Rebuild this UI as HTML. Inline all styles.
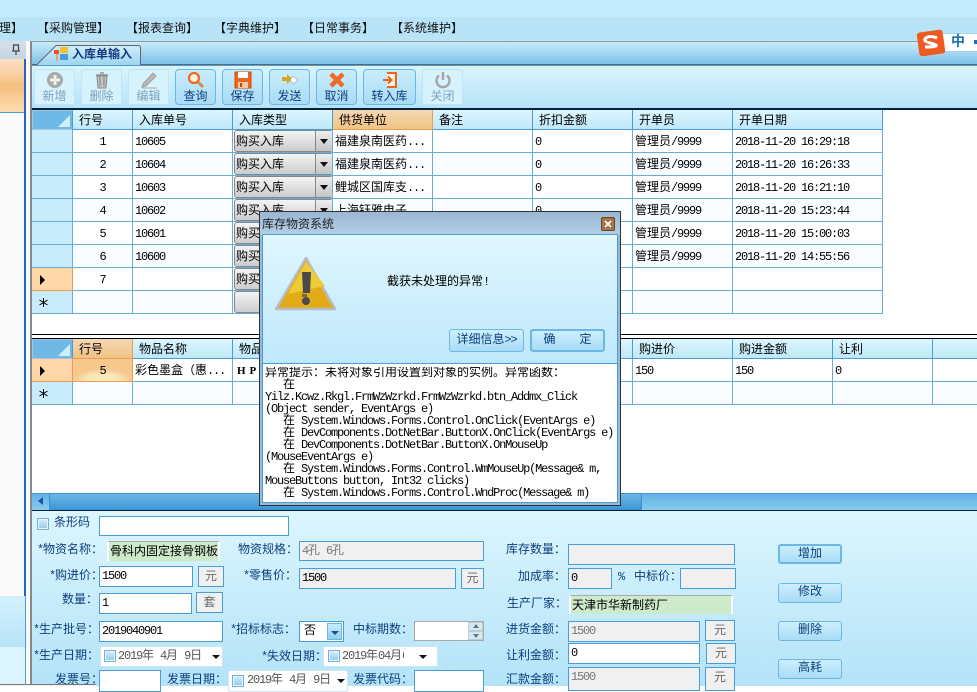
<!DOCTYPE html>
<html lang="zh"><head><meta charset="utf-8"><title>入库单输入</title>
<style>
html,body{margin:0;padding:0}
body{width:977px;height:686px;overflow:hidden;position:relative;background:#fff;font:12px/14px "Liberation Mono","WenQuanYi Zen Hei","Noto Sans CJK SC",monospace;color:#000}
div,span,svg,table{position:absolute;box-sizing:border-box}
em{font-style:normal;font-size:12px;letter-spacing:-1.2px;line-height:0}
.t{white-space:pre;height:14px;line-height:14px;margin-top:1px}
.l{color:#0e3f7c}
.m{top:22px;color:#111;white-space:pre;height:14px;line-height:14px}
.tb{top:69px;height:36px;border-radius:4px;border:1px solid #6db7e3;background:linear-gradient(#c9edfc,#a9dbf5);color:#0e3f7c;text-align:center}
.tb.d{border-color:#bee6f8;background:#d6f2fd;color:#7fa3bd}
.tb b{position:absolute;left:0;right:0;top:20px;font-weight:normal;line-height:14px}
.tb svg{left:50%;top:1px;margin-left:-10px}
table{border-collapse:separate;border-spacing:0;table-layout:fixed}
td,th{box-sizing:border-box;border-right:1px solid #6aaed6;border-bottom:1px solid #6aaed6;padding:2px 0 0 2px;font-weight:normal;text-align:left;white-space:nowrap;overflow:hidden;position:relative;height:23px;background:#fff}
tr.a td{background:#f9fdff}
th{height:20px;padding:2px 0 0 6px;border-bottom:1px solid #4a9cd8;border-right:1px solid #4a9cd8;background:linear-gradient(#dcf6fe,#bfe8fb)}
th.o{background:linear-gradient(#f6d8b4,#efc383);border-color:#ee9d50}
td.r{background:#c9ecfd!important;padding:0}
td.s{background:#fed6a8!important;border-color:#ee9d50;padding:0}
td.n{text-align:center;padding:2px 0 0 0}
.corner{background:#6fb9e6!important;padding:0;border:1px solid #a7c6e0;border-right:1px solid #4a9cd8}
.corner:after{content:"";position:absolute;right:2px;bottom:2px;width:0;height:0;border-left:12px solid transparent;border-bottom:12px solid #cfeefa}
.arr{left:8px;top:7px;width:0;height:0;border-left:5px solid #000;border-top:5px solid transparent;border-bottom:5px solid transparent}
.c{left:1px;top:0;width:99px;height:22px;border:1px solid #808890;border-radius:3px;background:linear-gradient(#f4f4f4,#cccccc);padding-left:1px;line-height:22px}
.c i{position:absolute;right:0;top:0;width:16px;height:20px;background:linear-gradient(#eee,#c4c4c4);border-left:1px solid #888}
.c i:after{content:"";position:absolute;left:4px;top:8px;border-left:4px solid transparent;border-right:4px solid transparent;border-top:5px solid #111}
.i{background:#fff;border:1px solid #4a9cd8;padding:2px 0 0 2px;line-height:14px;white-space:pre;overflow:hidden}
.g{background:#f0f0f0}
.gt{color:#777}
.u{background:#f0f0f0;border:1px solid #4a9cd8;color:#666;text-align:center;padding-top:3px;line-height:14px}
.gr{background:#cdeacb;border-top:1px solid #aaa;border-left:2px solid #fff;border-right:2px solid #fff;padding:3px 0 0 1px;line-height:14px;white-space:pre;overflow:hidden}
.b{left:778px;width:64px;height:20px;border:1px solid #6db7e3;border-radius:3px;background:linear-gradient(#cdeffd,#a8dcf6);color:#0e3f7c;text-align:center;line-height:17px}
.d{background:#fff;border:1px solid #cfe6f3;border-radius:2px;color:#555;line-height:20px;white-space:pre}
.ck{width:12px;height:12px;border:1px solid #6fb3d8;background:linear-gradient(#d4effb,#8ecbea);box-shadow:inset 0 0 0 1px #eef}
.da{width:0;height:0;border-left:4px solid transparent;border-right:4px solid transparent;border-top:4px solid #111}
</style></head><body>

<!-- top band -->
<div style="left:0;top:0;width:977px;height:17px;background:#c3eafd"></div>
<div style="left:0;top:17px;width:977px;height:24px;background:#b9e4f8"></div>
<div class="m" style="left:-1px">理】</div>
<div class="m" style="left:37px">【采购管理】</div>
<div class="m" style="left:126px">【报表查询】</div>
<div class="m" style="left:214px">【字典维护】</div>
<div class="m" style="left:302px">【日常事务】</div>
<div class="m" style="left:391px">【系统维护】</div>

<!-- left panel -->
<div style="left:0;top:41px;width:30px;height:645px;background:#fafafa"></div>
<div style="left:0;top:41px;width:26px;height:18px;background:linear-gradient(#d8e0e8,#c2d6e6)"></div>
<svg style="left:11px;top:44px" width="10" height="12" viewBox="0 0 10 12"><path d="M2.500 1h5v6h-5zM1 7h8M5 7v4" fill="none" stroke="#444" stroke-width="1.200"/></svg>
<div style="left:0;top:59px;width:25px;height:53px;background:linear-gradient(#fbdcc0 0,#f9d3a9 25%,#f5bf7d 50%,#f8ca93 70%,#fddcb0 100%)"></div>
<div style="left:24px;top:59px;width:2px;height:537px;background:#1f66c0"></div>
<div style="left:0;top:112px;width:24px;height:1px;background:#4a9cd8"></div>
<div style="left:0;top:596px;width:25px;height:51px;background:linear-gradient(#d3f1fe,#b8e4f9)"></div>
<div style="left:0;top:647px;width:25px;height:39px;background:#dbf4fe"></div>
<div style="left:25px;top:596px;width:1px;height:90px;background:#4a9cd8"></div>

<!-- right tab bar -->
<div style="left:30px;top:41px;width:947px;height:1px;background:#999"></div>
<div style="left:30px;top:41px;width:2px;height:645px;background:#888"></div>
<div style="left:32px;top:42px;width:945px;height:22px;background:linear-gradient(#c8ecfa,#7cc2e8)"></div>
<div style="left:32px;top:64px;width:945px;height:1px;background:#666"></div>
<svg style="left:32px;top:42px" width="112" height="24" viewBox="0 0 112 24"><defs><linearGradient id="tg" x1="0" y1="0" x2="0" y2="1"><stop offset="0" stop-color="#d0eefb"/><stop offset="1" stop-color="#9dd5f0"/></linearGradient></defs><path d="M5 22.500L24 3.500H106.500Q108.500 3.500 108.500 6V22.500" fill="url(#tg)" stroke="#666"/><path d="M6 22h102v2H6z" fill="#9dd5f0"/></svg>
<svg style="left:54px;top:47px" width="14" height="14" viewBox="0 0 14 14"><rect x="6" y="0" width="8" height="6" fill="#f2c230"/><rect x="6" y="7" width="8" height="6" fill="#4b9ad8"/><rect x="0" y="3" width="5" height="4" fill="#e8562a"/><rect x="2" y="7" width="2" height="7" fill="#e8a07a"/></svg>
<div class="t" style="left:72px;top:47px;color:#15397f;font-weight:bold">入库单输入</div>

<!-- toolbar -->
<div style="left:32px;top:65px;width:945px;height:44px;border-top:1px solid #4a9cd8;background:linear-gradient(#d9f5fe,#b5e2f8)"></div>
<div style="left:32px;top:108px;width:945px;height:2px;background:#06213a"></div>

<div class="tb d" style="left:34px;width:41px"><svg width="20" height="18" viewBox="0 0 20 18"><circle cx="10" cy="9" r="8" fill="#a9a9a9"/><path d="M10 4v10M5 9h10" stroke="#f0f0f0" stroke-width="3"/></svg><b>新增</b></div>
<div class="tb d" style="left:81px;width:41px"><svg width="20" height="18" viewBox="0 0 20 18"><path d="M5 5h10l-1 12H6z" fill="#c4c4c4" stroke="#888"/><path d="M4 4h12M8 2h4M8 6v9M12 6v9" stroke="#888" stroke-width="1.200"/></svg><b>删除</b></div>
<div class="tb d" style="left:128px;width:41px"><svg width="20" height="18" viewBox="0 0 20 18"><path d="M4 13L14 2l3 3L7 15l-4 1z" fill="#b9b9b9" stroke="#a0a0a0"/><path d="M3 17h15" stroke="#aaa"/></svg><b>编辑</b></div>
<div class="tb" style="left:175px;width:41px"><svg width="20" height="18" viewBox="0 0 20 18"><circle cx="8" cy="7" r="5" fill="#fdf3e0" stroke="#ee6a1f" stroke-width="2.200"/><path d="M12 11l5 5" stroke="#d98b45" stroke-width="3"/></svg><b>查询</b></div>
<div class="tb" style="left:222px;width:41px"><svg width="20" height="18" viewBox="0 0 20 18"><rect x="2" y="1" width="16" height="16" fill="#f0651f" stroke="#c84a10"/><rect x="5" y="1" width="10" height="6" fill="#fff"/><rect x="5" y="11" width="10" height="6" fill="#f8c8a0"/><rect x="7" y="12" width="2" height="4" fill="#b84a10"/></svg><b>保存</b></div>
<div class="tb" style="left:269px;width:41px"><svg width="20" height="18" viewBox="0 0 20 18"><path d="M2 6h5V3l5 5-5 5v-3H2z" fill="#d8a820"/><path d="M13 5l5 4-5 4-3-4z" fill="#fff" stroke="#6a7a8a" stroke-width=".5"/></svg><b>发送</b></div>
<div class="tb" style="left:316px;width:41px"><svg width="20" height="18" viewBox="0 0 20 18"><path d="M4 3l12 12M16 3L4 15" stroke="#ef6a22" stroke-width="4.500"/></svg><b>取消</b></div>
<div class="tb" style="left:363px;width:53px"><svg width="20" height="18" viewBox="0 0 20 18"><path d="M7 2h9v14H7" fill="#fdf1e0" stroke="#ea6620" stroke-width="2"/><path d="M3 9h8M8 5.500L11.500 9 8 12.500" fill="none" stroke="#ea6620" stroke-width="2"/></svg><b>转入库</b></div>
<div class="tb d" style="left:422px;width:41px"><svg width="20" height="18" viewBox="0 0 20 18"><path d="M6 4.500a6.500 6.500 0 1 0 8 0" fill="none" stroke="#a5a5a5" stroke-width="2.400"/><path d="M10 1v8" stroke="#a5a5a5" stroke-width="2.400"/></svg><b>关闭</b></div>

<!-- grid 1 -->
<table style="left:32px;top:110px;width:851px">
<colgroup><col style="width:41px"><col style="width:60px"><col style="width:100px"><col style="width:100px"><col style="width:100px"><col style="width:100px"><col style="width:100px"><col style="width:100px"><col style="width:150px"></colgroup>
<tr><th class="corner"></th><th>行号</th><th>入库单号</th><th>入库类型</th><th class="o">供货单位</th><th>备注</th><th>折扣金额</th><th>开单员</th><th>开单日期</th></tr>
<tr><td class="r"></td><td class="n"><em>1</em></td><td><em>10605</em></td><td><div class="c">购买入库<i></i></div></td><td>福建泉南医药<em>...</em></td><td></td><td><em>0</em></td><td>管理员<em>/9999</em></td><td><em>2018-11-20 16:29:18</em></td></tr>
<tr class="a"><td class="r"></td><td class="n"><em>2</em></td><td><em>10604</em></td><td><div class="c">购买入库<i></i></div></td><td>福建泉南医药<em>...</em></td><td></td><td><em>0</em></td><td>管理员<em>/9999</em></td><td><em>2018-11-20 16:26:33</em></td></tr>
<tr><td class="r"></td><td class="n"><em>3</em></td><td><em>10603</em></td><td><div class="c">购买入库<i></i></div></td><td>鲤城区国库支<em>...</em></td><td></td><td><em>0</em></td><td>管理员<em>/9999</em></td><td><em>2018-11-20 16:21:10</em></td></tr>
<tr class="a"><td class="r"></td><td class="n"><em>4</em></td><td><em>10602</em></td><td><div class="c">购买入库<i></i></div></td><td>上海钰雅电子<em>...</em></td><td></td><td><em>0</em></td><td>管理员<em>/9999</em></td><td><em>2018-11-20 15:23:44</em></td></tr>
<tr><td class="r"></td><td class="n"><em>5</em></td><td><em>10601</em></td><td><div class="c">购买入库<i></i></div></td><td></td><td></td><td><em>0</em></td><td>管理员<em>/9999</em></td><td><em>2018-11-20 15:00:03</em></td></tr>
<tr class="a"><td class="r"></td><td class="n"><em>6</em></td><td><em>10600</em></td><td><div class="c">购买入库<i></i></div></td><td></td><td></td><td><em>0</em></td><td>管理员<em>/9999</em></td><td><em>2018-11-20 14:55:56</em></td></tr>
<tr><td class="s"><div class="arr"></div></td><td class="n"><em>7</em></td><td></td><td><div class="c">购买入库<i></i></div></td><td></td><td></td><td></td><td></td><td></td></tr>
<tr class="a"><td class="r"><svg style="left:7px;top:7px" width="9" height="9" viewBox="0 0 9 9"><path d="M4.500 0v9M.5 2l8 5M8.500 2l-8 5" stroke="#000" stroke-width="1"/></svg></td><td></td><td></td><td><div class="c"></div></td><td></td><td></td><td></td><td></td><td></td></tr>
</table>
<div style="left:32px;top:334px;width:945px;height:1px;background:#000"></div>
<div style="left:32px;top:338px;width:945px;height:1px;background:#000"></div>

<!-- grid 2 -->
<table style="left:32px;top:339px;width:1001px">
<colgroup><col style="width:41px"><col style="width:60px"><col style="width:100px"><col style="width:100px"><col style="width:100px"><col style="width:100px"><col style="width:100px"><col style="width:100px"><col style="width:100px"><col style="width:100px"><col style="width:100px"></colgroup>
<tr><th class="corner"></th><th class="o">行号</th><th>物品名称</th><th>物品规格</th><th></th><th></th><th>数量</th><th>购进价</th><th>购进金额</th><th>让利</th><th></th></tr>
<tr><td class="s"><div class="arr"></div></td><td class="n" style="background:radial-gradient(ellipse 30px 12px at 50% 100%,#fff0c0 0,#fde4b4 60%,#f6c88e 100%);border-color:#ee9d50"><em>5</em></td><td>彩色墨盒（惠<em>...</em></td><td style="font:bold 11px 'Liberation Serif',serif;letter-spacing:4px;padding-left:4px">HP</td><td></td><td></td><td><em>1</em>盒</td><td><em>150</em></td><td><em>150</em></td><td><em>0</em></td><td></td></tr>
<tr class="a"><td class="r"><svg style="left:7px;top:7px" width="9" height="9" viewBox="0 0 9 9"><path d="M4.500 0v9M.5 2l8 5M8.500 2l-8 5" stroke="#000" stroke-width="1"/></svg></td><td></td><td></td><td></td><td></td><td></td><td></td><td></td><td></td><td></td><td></td></tr>
</table>

<!-- scrollbar -->
<div style="left:32px;top:493px;width:945px;height:17px;background:linear-gradient(#62b2e4,#86cbee);border-top:1px solid #4a9cd8"></div>
<div style="left:49px;top:493px;width:593px;height:17px;background:linear-gradient(#6bb7e6,#3f97d6);border:1px solid #3a8fd0"></div>
<div style="left:38px;top:497px;width:0;height:0;border-right:5px solid #1f4f9f;border-top:4px solid transparent;border-bottom:4px solid transparent"></div>
<div style="left:32px;top:510px;width:945px;height:1px;background:#06213a"></div>

<!-- form -->
<div style="left:32px;top:511px;width:945px;height:175px;background:linear-gradient(#dcf6fe,#b4e3f8)"></div>

<div class="ck" style="left:37px;top:518px"></div>
<div class="t l" style="left:54px;top:515px">条形码</div>
<div class="i" style="left:99px;top:516px;width:190px;height:20px"></div>

<div class="t l" style="left:37px;top:542px"><em>*</em>物资名称：</div>
<div class="gr" style="left:107px;top:541px;width:113px;height:20px">骨科内固定接骨钢板</div>
<div class="t l" style="left:238px;top:542px">物资规格：</div>
<div class="i g gt" style="left:299px;top:541px;width:185px;height:20px"><em>4</em>孔<em> 6</em>孔</div>

<div class="t l" style="left:49px;top:568px"><em>*</em>购进价：</div>
<div class="i" style="left:99px;top:566px;width:94px;height:21px"><em>1500</em></div>
<div class="u" style="left:198px;top:566px;width:26px;height:21px">元</div>
<div class="t l" style="left:243px;top:568px"><em>*</em>零售价：</div>
<div class="i g" style="left:299px;top:568px;width:157px;height:21px"><em>1500</em></div>
<div class="u" style="left:461px;top:568px;width:23px;height:21px">元</div>

<div class="t l" style="left:62px;top:592px">数量：</div>
<div class="i" style="left:99px;top:593px;width:93px;height:21px"><em>1</em></div>
<div class="u" style="left:196px;top:592px;width:27px;height:21px">套</div>

<div class="t l" style="left:33px;top:622px"><em>*</em>生产批号：</div>
<div class="i" style="left:99px;top:621px;width:124px;height:21px"><em>2019040901</em></div>
<div class="t l" style="left:230px;top:622px"><em>*</em>招标标志：</div>
<div class="i" style="left:299px;top:621px;width:45px;height:21px;padding-left:4px">否</div>
<div style="left:327px;top:623px;width:15px;height:17px;background:linear-gradient(#c6ecfc,#8fd0f0);border:1px solid #6db7e3"></div>
<div class="da" style="left:331px;top:631px;border-top-color:#1f4f7f"></div>
<div class="t l" style="left:353px;top:622px">中标期数：</div>
<div class="i" style="left:414px;top:621px;width:70px;height:20px;border-color:#aaa"></div>
<div style="left:468px;top:622px;width:15px;height:9px;background:#d8e8f0;border:1px solid #c0ccd4"></div>
<div style="left:468px;top:631px;width:15px;height:9px;background:#d8e8f0;border:1px solid #c0ccd4"></div>
<div style="left:473px;top:624px;width:0;height:0;border-left:3px solid transparent;border-right:3px solid transparent;border-bottom:4px solid #5a7a90"></div>
<div style="left:473px;top:634px;width:0;height:0;border-left:3px solid transparent;border-right:3px solid transparent;border-top:4px solid #5a7a90"></div>

<div class="t l" style="left:33px;top:648px"><em>*</em>生产日期：</div>
<div class="d" style="left:100px;top:646px;width:123px;height:21px"></div>
<div class="ck" style="left:104px;top:650px"></div>
<div class="t" style="left:118px;top:648px;color:#555"><em>2019</em>年<em> 4</em>月<em> 9</em>日</div>
<div class="da" style="left:212px;top:655px"></div>
<div class="t l" style="left:261px;top:649px"><em>*</em>失效日期：</div>
<div class="d" style="left:323px;top:646px;width:115px;height:21px"></div>
<div class="ck" style="left:328px;top:650px"></div>
<div class="t" style="left:342px;top:648px;color:#555;width:62px;overflow:hidden"><em>2019</em>年<em>04</em>月<em>09</em>日</div>
<div class="da" style="left:419px;top:655px"></div>

<div class="t l" style="left:55px;top:672px">发票号：</div>
<div class="i" style="left:99px;top:670px;width:62px;height:22px"></div>
<div class="t l" style="left:167px;top:672px">发票日期：</div>
<div class="d" style="left:228px;top:670px;width:120px;height:22px"></div>
<div class="ck" style="left:232px;top:675px"></div>
<div class="t" style="left:247px;top:672px;color:#555"><em>2019</em>年<em> 4</em>月<em> 9</em>日</div>
<div class="da" style="left:337px;top:679px"></div>
<div class="t l" style="left:353px;top:672px">发票代码：</div>
<div class="i" style="left:414px;top:670px;width:70px;height:22px"></div>

<div class="t l" style="left:506px;top:542px">库存数量：</div>
<div class="i g" style="left:568px;top:544px;width:167px;height:21px"></div>
<div class="t l" style="left:518px;top:569px">加成率：</div>
<div class="i g" style="left:568px;top:568px;width:44px;height:21px"><em>0</em></div>
<div class="t l" style="left:618px;top:569px"><em>%</em></div>
<div class="t l" style="left:634px;top:569px">中标价：</div>
<div class="i g" style="left:680px;top:568px;width:56px;height:21px"></div>
<div class="t l" style="left:507px;top:596px">生产厂家：</div>
<div class="gr" style="left:569px;top:595px;width:164px;height:19px">天津市华新制药厂</div>
<div class="t l" style="left:506px;top:622px">进货金额：</div>
<div class="i g gt" style="left:568px;top:621px;width:132px;height:21px"><em>1500</em></div>
<div class="u" style="left:705px;top:620px;width:30px;height:21px">元</div>
<div class="t l" style="left:506px;top:648px">让利金额：</div>
<div class="i" style="left:568px;top:643px;width:132px;height:21px"><em>0</em></div>
<div class="u" style="left:706px;top:643px;width:30px;height:21px">元</div>
<div class="t l" style="left:506px;top:672px">汇款金额：</div>
<div class="i g gt" style="left:568px;top:667px;width:132px;height:24px"><em>1500</em></div>
<div class="u" style="left:705px;top:667px;width:30px;height:24px">元</div>

<div class="b" style="top:544px;border-width:2px;line-height:16px">增加</div>
<div class="b" style="top:583px">修改</div>
<div class="b" style="top:621px">删除</div>
<div class="b" style="top:659px">高耗</div>

<!-- bottom edge of overlapping window -->
<div style="left:0;top:684px;width:96px;height:1px;background:#777"></div>
<div style="left:0;top:685px;width:96px;height:1px;background:#f4f4f4"></div>

<!-- sogou -->
<div style="left:940px;top:33px;width:37px;height:19px;background:#fff;border:1px solid #a8d4ee;border-right:0"></div>
<div style="left:918px;top:31px;width:26px;height:24px;background:#ef5a20;border-radius:3px;transform:rotate(-8deg)"></div>
<svg style="left:921px;top:34px" width="20" height="18" viewBox="0 0 20 18"><path d="M16 4Q9 1 5 4T9 9t6 3-11 1" fill="none" stroke="#fff" stroke-width="3"/></svg>
<div class="t" style="left:951px;top:35px;color:#1a70bc;font-weight:bold;font-size:14px">中</div>
<div style="left:974px;top:40px;width:3px;height:4px;background:#1a70bc"></div>

<!-- dialog -->
<div style="left:259px;top:211px;width:362px;height:295px;background:#9ab9d6;border:1px solid #333"></div>
<div style="left:260px;top:212px;width:360px;height:23px;background:linear-gradient(#99b6d4,#b6cfe7)"></div>
<div class="t" style="left:262px;top:217px;color:#222">库存物资系统</div>
<div style="left:601px;top:217px;width:14px;height:14px;background:#a5754a;border:1px solid #6a4626;border-radius:2px"></div>
<svg style="left:604px;top:220px" width="8" height="8" viewBox="0 0 8 8"><path d="M1 1l6 6M7 1L1 7" stroke="#fff" stroke-width="1.600"/></svg>
<div style="left:262px;top:234px;width:356px;height:130px;border:1px solid #4a9cd8;background:linear-gradient(#e0f6fe,#bfe8fc)"></div>
<svg style="left:275px;top:256px" width="62" height="56" viewBox="0 0 62 56"><path d="M31 2L60 53H1z" fill="#e2ab18" stroke="#b8bcc0" stroke-width="2.500" stroke-linejoin="round"/><path d="M31 6L13 38 50 30z" fill="#eecb34"/><path d="M27 16h9l-1 21h-7z" fill="#4a4a4a"/><path d="M27 38h5v3h-5z" fill="#7a6a30"/><circle cx="31" cy="45" r="4" fill="#4a4a4a"/></svg>
<div class="t" style="left:387px;top:274px">截获未处理的异常<em>!</em></div>
<div style="left:449px;top:329px;width:75px;height:23px;border:1px solid #6db7e3;border-radius:3px;background:linear-gradient(#cdeffd,#a8dcf6);color:#0e3f7c;text-align:center;line-height:20px">详细信息<em>&gt;&gt;</em></div>
<div style="left:530px;top:329px;width:75px;height:23px;border:2px solid #6db7e3;border-radius:3px;background:linear-gradient(#cdeffd,#a8dcf6);color:#0e3f7c;text-align:center;line-height:19px;white-space:pre">确<em>    </em>定</div>
<div style="left:262px;top:363px;width:356px;height:140px;background:#fff;border:1px solid #4a9cd8"></div>
<div style="left:265px;top:367px;width:350px;height:134px;line-height:12px;white-space:pre;overflow:hidden">异常提示：未将对象引用设置到对象的实例。异常函数：
<em>   </em>在
<em>Yilz.Kcwz.Rkgl.FrmWzWzrkd.FrmWzWzrkd.btn_Addmx_Click</em>
<em>(Object sender, EventArgs e)</em>
<em>   </em>在<em> System.Windows.Forms.Control.OnClick(EventArgs e)</em>
<em>   </em>在<em> DevComponents.DotNetBar.ButtonX.OnClick(EventArgs e)</em>
<em>   </em>在<em> DevComponents.DotNetBar.ButtonX.OnMouseUp</em>
<em>(MouseEventArgs e)</em>
<em>   </em>在<em> System.Windows.Forms.Control.WmMouseUp(Message&amp; m,</em>
<em>MouseButtons button, Int32 clicks)</em>
<em>   </em>在<em> System.Windows.Forms.Control.WndProc(Message&amp; m)</em></div>

</body></html>
